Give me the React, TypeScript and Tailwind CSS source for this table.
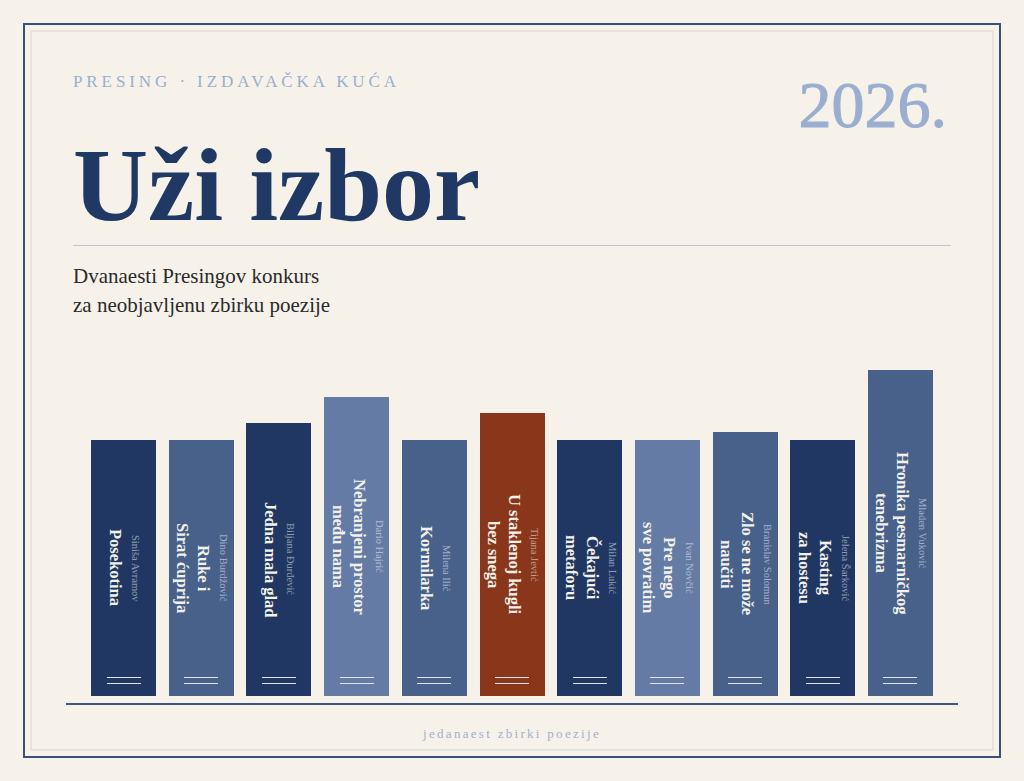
const books = [
  { author: "Siniša Avramov", title: ["Posekotina"], color: "bg-[#1f3762]", height: 256 },
  { author: "Dino Burdžović", title: ["Ruke i", "Sirat ćuprija"], color: "bg-[#47618b]", height: 256 },
  { author: "Biljana Đurđević", title: ["Jedna mala glad"], color: "bg-[#1f3762]", height: 273 },
  { author: "Dario Hajrić", title: ["Nebranjeni prostor", "među nama"], color: "bg-[#647ba5]", height: 299 },
  { author: "Milena Ilić", title: ["Kormilarka"], color: "bg-[#47618b]", height: 256 },
  { author: "Tijana Jevtić", title: ["U staklenoj kugli", "bez snega"], color: "bg-[#8a361b]", height: 283 },
  { author: "Milan Lukić", title: ["Čekajući", "metaforu"], color: "bg-[#1f3762]", height: 256 },
  { author: "Ivan Novčić", title: ["Pre nego", "sve povratim"], color: "bg-[#647ba5]", height: 256 },
  { author: "Branislav Solomun", title: ["Zlo se ne može", "naučiti"], color: "bg-[#47618b]", height: 264 },
  { author: "Jelena Šarković", title: ["Kasting", "za hostesu"], color: "bg-[#1f3762]", height: 256 },
  { author: "Mladen Vuković", title: ["Hronika pesmarničkog", "tenebrizma"], color: "bg-[#47618b]", height: 326 },
];

function Book({ book }: { book: (typeof books)[number] }) {
  return (
    <div
      className={`relative flex w-[65px] shrink-0 items-center justify-center ${book.color}`}
      style={{ height: book.height }}
    >
      <div className="text-center [writing-mode:vertical-rl]">
        <div className="ml-[3px] text-[10.5px] leading-[13px] text-white/50">{book.author}</div>
        <div className="text-[16.5px] font-bold leading-[21px] text-[#f4f1ea]">
          {book.title.map((line) => (
            <div key={line}>{line}</div>
          ))}
        </div>
      </div>
      <div className="absolute bottom-[12px] left-1/2 h-[7px] w-[34px] -translate-x-1/2 border-y-[1.5px] border-[#dfe3ea]" />
    </div>
  );
}

export default function App() {
  return (
    <div className="h-[781px] w-full bg-[#f6f2ea] p-[23px] font-['Liberation_Serif',serif]">
      <div className="flex h-full flex-col border-2 border-[#3b5079] p-[5px]">
        <div className="flex flex-1 flex-col border-2 border-[#e4e3dc] px-[41px] pt-[40px] pb-[7px]">
          <div className="flex items-start justify-between">
            <div>
              <p className="text-[17px] leading-[20px] tracking-[0.23em] text-[#9aaed0]">
                PRESING · IZDAVAČKA KUĆA
              </p>
              <h1 className="mt-[41px] text-[104px] font-bold leading-[104px] text-[#1f3864]">
                Uži izbor
              </h1>
            </div>
            <div className="mr-[4px] text-[66px] leading-[66px] text-[#9aaed0] [-webkit-text-stroke:1px_#9aaed0]">
              2026.
            </div>
          </div>

          <div className="mt-[8px] h-px bg-[#bcc5d1]" />

          <p className="mt-[16px] text-[21px] leading-[29px] text-[#2a2a2a]">
            Dvanaesti Presingov konkurs
            <br />
            za neobjavljenu zbirku poezije
          </p>

          <div className="flex flex-1 items-end justify-center gap-[12.7px]">
            {books.map((b) => (
              <Book key={b.author} book={b} />
            ))}
          </div>

          <div className="-mx-[7px] mt-[7px] h-[2px] bg-[#3e5583]" />

          <p className="mt-[21px] text-center text-[13px] leading-[16px] tracking-[2.3px] text-[#a3b0c6]">
            jedanaest zbirki poezije
          </p>
        </div>
      </div>
    </div>
  );
}
